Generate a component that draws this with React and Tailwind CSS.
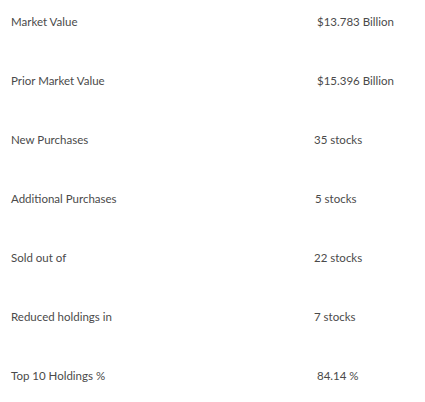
import React from "react";

const rows = [
  { label: "Market Value", value: "$13.783 Billion", shift: "pl-[3px]" },
  { label: "Prior Market Value", value: "$15.396 Billion", shift: "pl-[3px]" },
  { label: "New Purchases", value: "35 stocks", shift: "pl-0" },
  { label: "Additional Purchases", value: "5 stocks", shift: "pl-[1px]" },
  { label: "Sold out of", value: "22 stocks", shift: "pl-0" },
  { label: "Reduced holdings in", value: "7 stocks", shift: "pl-0" },
  { label: "Top 10 Holdings %", value: "84.14 %", shift: "pl-[3px]" },
];

const App = () => {
  return (
    <div
      className="w-[425px] h-[402px] bg-white overflow-hidden text-[11.5px] leading-[18px] text-[#4a4a4a]"
      style={{ fontFamily: "Lato, 'Open Sans', sans-serif" }}
    >
      {rows.map((row, i) => (
        <div key={i} className="grid grid-cols-[303px_1fr] h-[59px] pt-[13px] pl-[11px]">
          <span>{row.label}</span>
          <span className={row.shift}>{row.value}</span>
        </div>
      ))}
    </div>
  );
};

export default App;
